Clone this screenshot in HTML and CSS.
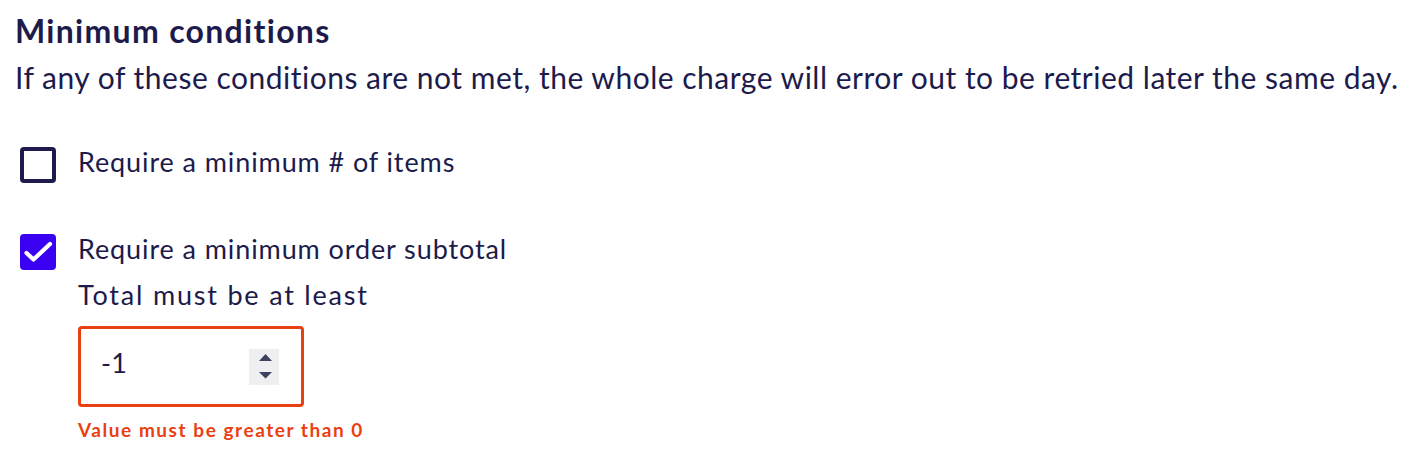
FILE: index.html
```html
<!DOCTYPE html>
<html>
<head>
<meta charset="utf-8">
<link rel="stylesheet" href="styles.css">
</head>
<body>
<section class="panel">
  <h2 class="title">Minimum conditions</h2>
  <p class="desc">If any of these conditions are not met, the whole charge will error out to be retried later the same day.</p>

  <div class="option">
    <span class="box"></span>
    <span class="label">Require a minimum # of items</span>
  </div>

  <div class="option checked">
    <span class="box">
      <svg viewBox="0 0 36 36" width="36" height="36"><path d="M6.5 19 L13.5 25.5 L30 10" fill="none" stroke="#fff" stroke-width="4.2" stroke-linecap="round" stroke-linejoin="round"/></svg>
    </span>
    <div class="optbody">
      <span class="label">Require a minimum order subtotal</span>
      <span class="sub">Total must be at least</span>
      <div class="field">
        <span class="value">-1</span>
        <span class="spin">
          <svg viewBox="0 0 30 36" width="30" height="36"><path d="M10 12 L16.5 5 L23 12 Z M10 23 L23 23 L16.5 29.5 Z" fill="#3f4163"/></svg>
        </span>
      </div>
      <span class="error">Value must be greater than 0</span>
    </div>
  </div>
</section>
</body>
</html>
```
FILE: styles.css
```css
html, body { margin: 0; padding: 0; background: #fff; }
body { font-family: Lato, "Open Sans", sans-serif; color: #1c1b4b; }
.panel { padding: 11px 15px 0 15px; }
.title { margin: 0; font-size: 32px; font-weight: 700; line-height: 40px; letter-spacing: 1.3px; }
.desc { margin: 8px 0 0 0; font-size: 30px; line-height: 36px; letter-spacing: 0.5px; white-space: nowrap; }
.option { display: flex; align-items: flex-start; gap: 22px; padding-left: 5px; margin-top: 49px; }
.option.checked { margin-top: 48px; }
.box { width: 28px; height: 28px; margin-top: 3px; border: 4px solid #1c1b4b; border-radius: 4px; flex: none; display: block; }
.checked .box { background: #3a00f2; border-color: #3a00f2; }
.checked .box svg { display: block; margin: -4px; }
.label { font-size: 27px; line-height: 36px; letter-spacing: 0.9px; display: block; }
.optbody { display: flex; flex-direction: column; align-items: flex-start; }
.sub { font-size: 27px; line-height: 36px; letter-spacing: 1.8px; margin-top: 10px; display: block; }
.field { margin-top: 13px; width: 178px; height: 75px; border: 3px solid #ea3f12; border-radius: 4px; display: flex; align-items: center; justify-content: space-between; padding: 0 22px 0 20px; }
.value { font-size: 27px; line-height: 36px; padding-bottom: 8px; letter-spacing: 0.2px; }
.spin { width: 30px; height: 36px; background: #efeff1; display: block; }
.spin svg { display: block; }
.error { color: #ea3f12; font-size: 19px; line-height: 24px; font-weight: 700; letter-spacing: 1.55px; margin-top: 11px; display: block; }
```
